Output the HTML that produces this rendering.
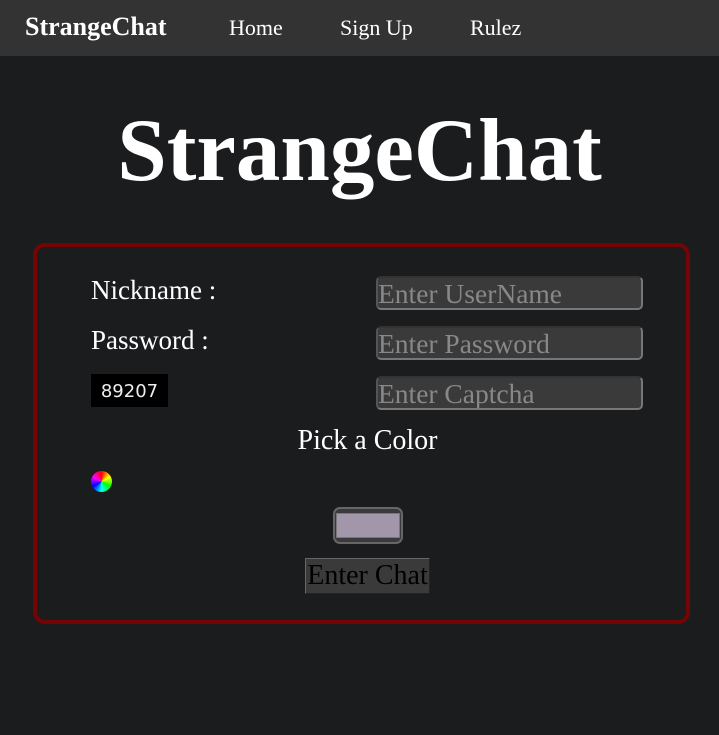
<!DOCTYPE html>
<html><head><style>
body{margin:0;width:719px;height:735px;background:#1b1c1e;font-family:"Liberation Serif",serif;position:relative;overflow:hidden}
.nav{position:absolute;left:0;top:0;width:719px;height:56px;background:#333}
.nav span{position:absolute;top:15px;color:#fff;font-size:22px}
.a{position:absolute;white-space:nowrap}
h1{position:absolute;left:0;width:719px;top:101px;margin:0;text-align:center;color:#fff;font-size:89px;font-weight:bold;line-height:100px}
.card{position:absolute;left:33px;top:243px;width:649px;height:373px;border:4px solid #750404;border-radius:12px}
.inp{position:absolute;left:376px;width:263px;height:30px;background:#3a3a3a;border:2px solid #777;border-top-color:#333;border-left-color:#555;border-radius:5px;color:#888;font-size:27.5px;line-height:31px;white-space:nowrap;overflow:hidden}
.lbl{position:absolute;left:91px;color:#fff;font-size:27px}
</style></head><body>
<div class="nav">
<span style="left:25px;font-weight:bold;font-size:26px;top:12px">StrangeChat</span>
<span style="left:229px">Home</span>
<span style="left:340px">Sign Up</span>
<span style="left:470px">Rulez</span>
</div>
<h1>StrangeChat</h1>
<div class="card"></div>
<div class="lbl" style="top:275px">Nickname :</div>
<div class="lbl" style="top:325px">Password :</div>
<div class="inp" style="top:276px">Enter UserName</div>
<div class="inp" style="top:326px">Enter Password</div>
<div class="inp" style="top:376px">Enter Captcha</div>
<div class="a" style="left:91px;top:374px;width:77px;height:33px;background:#000;color:#eee;font-family:'DejaVu Sans',sans-serif;font-size:18px;line-height:35px;text-align:center">89207</div>
<div class="a" style="left:0;width:735px;top:425px;text-align:center;color:#fff;font-size:28px">Pick a Color</div>
<div class="a" style="left:91px;top:471px;width:21px;height:21px;border-radius:50%;background:conic-gradient(red,#ff0,#0f0,#0ff,#00f,#f0f,red)"></div>
<div class="a" style="left:333px;top:507px;width:66px;height:33px;background:#3a3a3a;border:2px solid #666;border-radius:7px"></div>
<div class="a" style="left:336px;top:513px;width:62px;height:23px;background:#a297aa;border:1px solid #777"></div>
<div class="a" style="left:305px;top:558px;width:123px;height:34px;background:#3a3a3a;border:1px solid #666;border-right-color:#222;border-bottom-color:#222;color:#000;font-size:28px;line-height:34px;text-align:center">Enter Chat</div>
</body></html>
